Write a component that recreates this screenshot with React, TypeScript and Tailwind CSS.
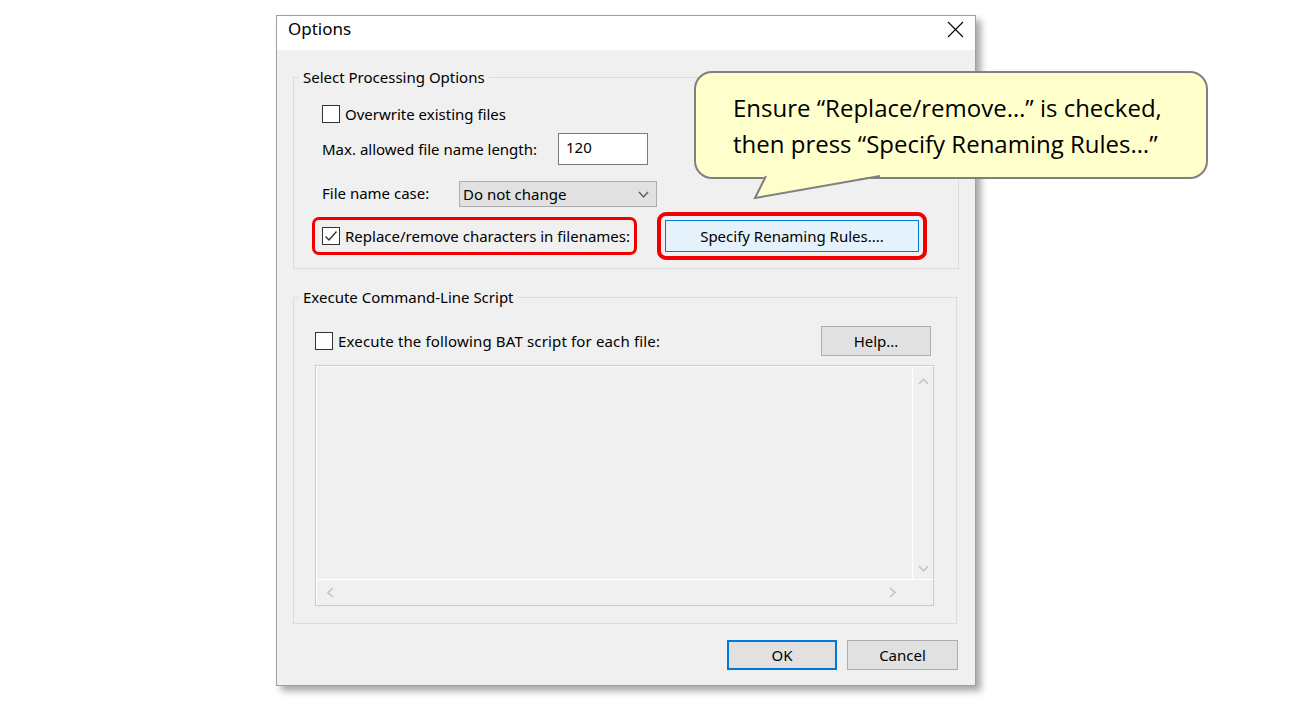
import React from "react";

const ui = { fontFamily: '"Noto Sans", "Segoe UI", sans-serif' };

function CheckBox({ checked }: { checked?: boolean }) {
  return (
    <div className="w-[18px] h-[18px] shrink-0 border border-[#333333] bg-white flex items-center justify-center">
      {checked && (
        <svg width="14" height="14" viewBox="0 0 14 14">
          <path d="M1.5 7.5 L5 11 L12.5 2.5" fill="none" stroke="#333333" strokeWidth="1.4" />
        </svg>
      )}
    </div>
  );
}

function Chevron({ dir, color = "#c2c2c2" }: { dir: "up" | "down" | "left" | "right"; color?: string }) {
  const d =
    dir === "up"
      ? "M1 7 L5.5 2 L10 7"
      : dir === "down"
      ? "M1 3 L5.5 8 L10 3"
      : dir === "left"
      ? "M7 1 L2 5.5 L7 10"
      : "M3 1 L8 5.5 L3 10";
  return (
    <svg width="11" height="11" viewBox="0 0 11 11">
      <path d={d} fill="none" stroke={color} strokeWidth="1.5" />
    </svg>
  );
}

function WinButton({ label, w, primary }: { label: string; w: string; primary?: boolean }) {
  return (
    <div
      className={`${w} h-[30px] flex items-center justify-center bg-[#e1e1e1] text-[15px] leading-[20px] text-black ${
        primary ? "border-2 border-[#0078d7]" : "border border-[#adadad]"
      }`}
    >
      {label}
    </div>
  );
}

export default function App() {
  return (
    <div className="w-[1296px] h-[702px] bg-white relative overflow-hidden" style={ui}>
      {/* dialog window */}
      <div className="ml-[276px] pt-[15px]">
        <div className="w-[700px] h-[671px] border border-[#a0a0a0] bg-[#f0f0f0] flex flex-col shadow-[5px_5px_7px_rgba(0,0,0,0.35)]">
          {/* title bar */}
          <div className="h-[34px] bg-white flex items-start justify-between pl-[11px] pr-[10px] pt-[2px]">
            <span className="text-[17px] leading-[22px] text-black">Options</span>
            <svg width="17" height="17" viewBox="0 0 17 17" className="mr-[1px] mt-[3px]">
              <path d="M1 1 L16 16 M16 1 L1 16" stroke="#000" strokeWidth="1.1" />
            </svg>
          </div>

          {/* body */}
          <div className="flex-1 px-[16px] text-[15px] leading-[20px] text-black">
            <fieldset className="mt-[17px] border border-[#dcdcdc] pb-[8px]">
              <legend className="ml-[5px] px-[4px] leading-[20px]">Select Processing Options</legend>

              <div className="mt-[17px] h-[20px] ml-[28px] flex items-center gap-[5px]">
                <CheckBox />
                <span>Overwrite existing files</span>
              </div>

              <div className="mt-[9px] h-[32px] ml-[28px] flex items-center">
                <span className="w-[236px]">Max. allowed file name length:</span>
                <div className="w-[90px] h-[32px] border border-[#7a7a7a] bg-white pl-[7px] pt-[3px]">120</div>
              </div>

              <div className="mt-[16px] h-[26px] ml-[28px] flex items-center">
                <span className="w-[137px] -mt-[2px]">File name case:</span>
                <div className="w-[198px] h-[26px] border border-[#adadad] bg-[#e1e1e1] flex items-center justify-between pl-[3px] pr-[7px]">
                  <span>Do not change</span>
                  <Chevron dir="down" color="#606060" />
                </div>
              </div>

              <div className="mt-[5px] h-[48px] flex items-center">
                <div className="ml-[18px] w-[325px] h-[38px] border-[3px] border-[#f00000] rounded-[7px] flex items-center gap-[5px] pl-[7px]">
                  <CheckBox checked />
                  <span>Replace/remove characters in filenames:</span>
                </div>
                <div className="ml-[20px] w-[270px] h-[48px] border-[4px] border-[#f00000] rounded-[9px] p-[4px]">
                  <div className="w-full h-full bg-[#e5f1fb] border border-[#0078d7] flex items-center justify-center">
                    Specify Renaming Rules....
                  </div>
                </div>
              </div>
            </fieldset>

            <fieldset className="mt-[18px] mr-[2px] border border-[#dcdcdc] pb-[17px]">
              <legend className="ml-[5px] px-[4px] leading-[20px]">Execute Command-Line Script</legend>

              <div className="mt-[19px] h-[30px] flex items-center">
                <div className="ml-[21px] flex items-center gap-[5px]">
                  <CheckBox />
                  <span className="tracking-[0.15px]">Execute the following BAT script for each file:</span>
                </div>
                <div className="ml-auto mr-[25px]">
                  <WinButton label="Help..." w="w-[110px]" />
                </div>
              </div>

              {/* disabled multi-line script box */}
              <div className="mt-[9px] ml-[21px] mr-[22px] h-[241px] border border-[#cccccc]">
                <div className="w-full h-full border-t border-l border-white flex flex-col">
                  <div className="flex-1 flex">
                    <div className="flex-1 border-r border-b border-white" />
                    <div className="w-[20px] border-b border-white flex flex-col items-center justify-between pt-[10px] pb-[5px]">
                      <Chevron dir="up" />
                      <Chevron dir="down" />
                    </div>
                  </div>
                  <div className="h-[25px] flex items-center">
                    <div className="flex-1 flex items-center justify-between pl-[9px] pr-[15px]">
                      <Chevron dir="left" />
                      <Chevron dir="right" />
                    </div>
                    <div className="w-[20px]" />
                  </div>
                </div>
              </div>
            </fieldset>

            <div className="mt-[16px] flex justify-end gap-[10px] mr-[1px]">
              <WinButton label="OK" w="w-[110px]" primary />
              <WinButton label="Cancel" w="w-[111px]" />
            </div>
          </div>
        </div>
      </div>

      {/* callout bubble */}
      <div
        className="absolute left-[694px] top-[71px] w-[514px] h-[108px] rounded-[18px] border-2 border-[#808080] bg-[#ffffcc] pl-[37px] pt-[17px] text-[24px] leading-[36px] text-black"
        style={{ fontFamily: '"Open Sans", "Noto Sans", sans-serif' }}
      >
        <div>Ensure “Replace/remove…” is checked,</div>
        <div>then press “Specify Renaming Rules…”</div>
        <svg
          className="absolute left-[-2px] top-[-2px] overflow-visible"
          width="514"
          height="130"
          viewBox="0 0 514 130"
        >
          <polygon points="71,104 61,127 186,104" fill="#ffffcc" />
          <polyline points="72,105 61,127 186,105" fill="none" stroke="#808080" strokeWidth="2" />
        </svg>
      </div>
    </div>
  );
}
